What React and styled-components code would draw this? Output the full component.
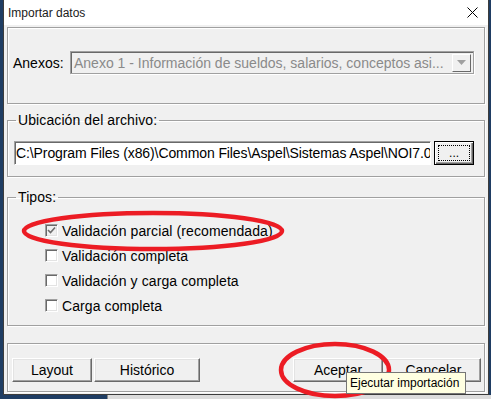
import React from "react";
import styled, { createGlobalStyle } from "styled-components";

const Global = createGlobalStyle`
  body {
    margin: 0;
    background: #1f3d63;
    font-family: "Liberation Sans", Arial, sans-serif;
    overflow: hidden;
  }
`;

const Page = styled.div`
  position: relative;
  width: 491px;
  height: 399px;
  padding-left: 3px;
  box-sizing: border-box;
`;

const Window = styled.div`
  width: 486px;
  height: 395px;
  box-sizing: border-box;
  border: 1px solid #3c3c3c;
  border-top: none;
  background: #f0f0f0;
  display: flex;
  flex-direction: column;
`;

const TitleBar = styled.div`
  height: 25px;
  flex: none;
  background: #fff;
  display: flex;
  align-items: center;
  justify-content: space-between;
  padding: 0 10px 0 4px;
  font-size: 12px;
  color: #1a1a1a;
`;

const Client = styled.div`
  flex: 1;
  padding: 2px 3px 0 3px;
  display: flex;
  flex-direction: column;
  font-size: 14px;
`;

const Frame = styled.fieldset`
  margin: ${(p) => p.$mt || 0}px 0 0 0;
  padding: ${(p) => p.$pad};
  border: 1px solid #a0a0a0;
  box-shadow: inset 1px 1px 0 #fff, 1px 1px 0 #fff;
  min-width: 0;
  display: flex;
  flex-direction: ${(p) => (p.$col ? "column" : "row")};
  align-items: ${(p) => (p.$col ? "stretch" : "center")};
`;

const Legend = styled.legend`
  font-size: 14px;
  letter-spacing: 0.1px;
  line-height: 15px;
  padding: 0 2px;
  margin-left: 2px;
  color: #000;
`;

const Label = styled.span`
  color: #000;
  width: 57px;
  flex: none;
`;

const Combo = styled.div`
  width: 404px;
  height: 23px;
  box-sizing: border-box;
  border: 1px solid #a0a0a0;
  box-shadow: inset 1px 1px 0 #696969, 1px 1px 0 #fff;
  background: #f0f0f0;
  display: flex;
  align-items: center;
  padding: 0 2px 0 2px;
`;

const ComboText = styled.span`
  flex: 1;
  color: #8a8a8a;
  white-space: nowrap;
  overflow: hidden;
  padding-left: 1px;
`;

const DropButton = styled.span`
  width: 19px;
  height: 18px;
  box-sizing: border-box;
  border: 1px solid;
  border-color: #fff #696969 #696969 #fff;
  display: flex;
  align-items: center;
  justify-content: center;
  flex: none;
`;

const PathRow = styled.div`
  display: flex;
  gap: 3px;
  align-items: center;
`;

const PathInput = styled.div`
  width: 419px;
  height: 24px;
  box-sizing: border-box;
  background: #fff;
  border: 1px solid;
  border-color: #a0a0a0 #fff #fff #a0a0a0;
  box-shadow: inset 1px 1px 0 #696969;
  line-height: 22px;
  padding-left: 1px;
  letter-spacing: -0.1px;
  white-space: nowrap;
  overflow: hidden;
`;

const Button = styled.button`
  width: ${(p) => p.$w}px;
  height: 24px;
  box-sizing: border-box;
  margin: 0 0 0 ${(p) => p.$ml || 0}px;
  padding: 0;
  background: #f0f0f0;
  font-family: inherit;
  font-size: 14px;
  color: #000;
  border: 1px solid;
  border-color: #fff #696969 #696969 #fff;
  box-shadow: inset -1px -1px 0 #a0a0a0, inset 1px 1px 0 #e3e3e3;
  display: flex;
  align-items: center;
  justify-content: center;
`;

const DefaultButton = styled(Button)`
  border: 1px solid #000;
  box-shadow: inset 1px 1px 0 #fff, inset -1px -1px 0 #696969,
    inset -2px -2px 0 #a0a0a0;
  padding: 3px;
`;

const Focus = styled.span`
  flex: 1;
  align-self: stretch;
  border: 1px dotted #000;
  display: flex;
  align-items: flex-end;
  justify-content: center;
  font-size: 12px;
  line-height: 13px;
`;

const CheckList = styled.div`
  padding-left: 31px;
  display: flex;
  flex-direction: column;
`;

const CheckRow = styled.div`
  height: 25px;
  display: flex;
  align-items: center;
  gap: 4px;
  color: #000;
  letter-spacing: 0.1px;
`;

const Box = styled.span`
  width: 13px;
  height: 13px;
  box-sizing: border-box;
  border: 1px solid;
  border-color: #a0a0a0 #fff #fff #a0a0a0;
  box-shadow: inset 1px 1px 0 #696969, inset -1px -1px 0 #e3e3e3;
  background: ${(p) => (p.$on ? "#f0f0f0" : "#fff")};
  display: flex;
  align-items: center;
  justify-content: center;
  flex: none;
`;

const ButtonBar = styled.div`
  flex: 1;
  display: flex;
  align-items: center;
`;

const Right = styled.div`
  margin-left: auto;
  display: flex;
  gap: 3px;
`;

const Tooltip = styled.div`
  position: absolute;
  left: 346px;
  top: 372px;
  width: 120px;
  height: 22px;
  box-sizing: border-box;
  background: #ffffe1;
  border: 1px solid #767676;
  font-size: 12px;
  line-height: 20px;
  padding-left: 3px;
  color: #000;
  white-space: nowrap;
  z-index: 3;
`;

const Marks = styled.svg`
  position: absolute;
  left: 0;
  top: 0;
  pointer-events: none;
  z-index: 2;
`;

const BackWindow = styled.div`
  position: absolute;
  left: 107px;
  top: 395px;
  width: 384px;
  height: 8px;
  background: #dcdcdc;
  border-left: 1px solid #8a8a8a;
`;

const checks = [
  { text: "Validación parcial (recomendada)", on: true },
  { text: "Validación completa", on: false },
  { text: "Validación y carga completa", on: false },
  { text: "Carga completa", on: false },
];

export default function App() {
  return (
    <Page>
      <Global />
      <Window>
        <TitleBar>
          <span>Importar datos</span>
          <svg width="11" height="11" viewBox="0 0 11 11">
            <path d="M0.5 0.5 L10.5 10.5 M10.5 0.5 L0.5 10.5" stroke="#000" strokeWidth="1" />
          </svg>
        </TitleBar>
        <Client>
          <Frame as="div" $pad="23px 10px 29px 5px">
            <Label>Anexos:</Label>
            <Combo>
              <ComboText>Anexo 1 - Información de sueldos, salarios, conceptos asi...</ComboText>
              <DropButton>
                <svg width="9" height="5" viewBox="0 0 9 5">
                  <path d="M0 0 H9 L4.5 5 Z" fill="#a0a0a0" />
                </svg>
              </DropButton>
            </Combo>
          </Frame>

          <Frame $mt={9} $pad="13px 10px 11px 6px" $col>
            <Legend>Ubicación del archivo:</Legend>
            <PathRow>
              <PathInput>{"C:\\Program Files (x86)\\Common Files\\Aspel\\Sistemas Aspel\\NOI7.0"}</PathInput>
              <DefaultButton $w={40}>
                <Focus>...</Focus>
              </DefaultButton>
            </PathRow>
          </Frame>

          <Frame $mt={13} $pad="13px 10px 7px 6px" $col>
            <Legend>Tipos:</Legend>
            <CheckList>
              {checks.map((c) => (
                <CheckRow key={c.text}>
                  <Box $on={c.on}>
                    {c.on && (
                      <svg width="9" height="9" viewBox="0 0 9 9">
                        <path d="M1 4 L3.5 6.5 L8 1.5" stroke="#6d6d6d" strokeWidth="1.6" fill="none" />
                      </svg>
                    )}
                  </Box>
                  <span>{c.text}</span>
                </CheckRow>
              ))}
            </CheckList>
          </Frame>

          <Frame as="div" $mt={17} $pad="14px 3px 9px 4px">
            <ButtonBar>
              <Button $w={80}>Layout</Button>
              <Button $w={106} $ml={2}>Histórico</Button>
              <Right>
                <Button $w={90}>Aceptar</Button>
                <Button $w={95}>Cancelar</Button>
              </Right>
            </ButtonBar>
          </Frame>
        </Client>
      </Window>

      <BackWindow />

      <Marks width="491" height="399" viewBox="0 0 491 399">
        <ellipse cx="153" cy="231" rx="129" ry="18" fill="none" stroke="#ec1c24" strokeWidth="4.5" />
        <ellipse cx="335" cy="370" rx="54" ry="26" fill="none" stroke="#ec1c24" strokeWidth="4.5" />
      </Marks>
      <Tooltip>Ejecutar importación</Tooltip>
    </Page>
  );
}
